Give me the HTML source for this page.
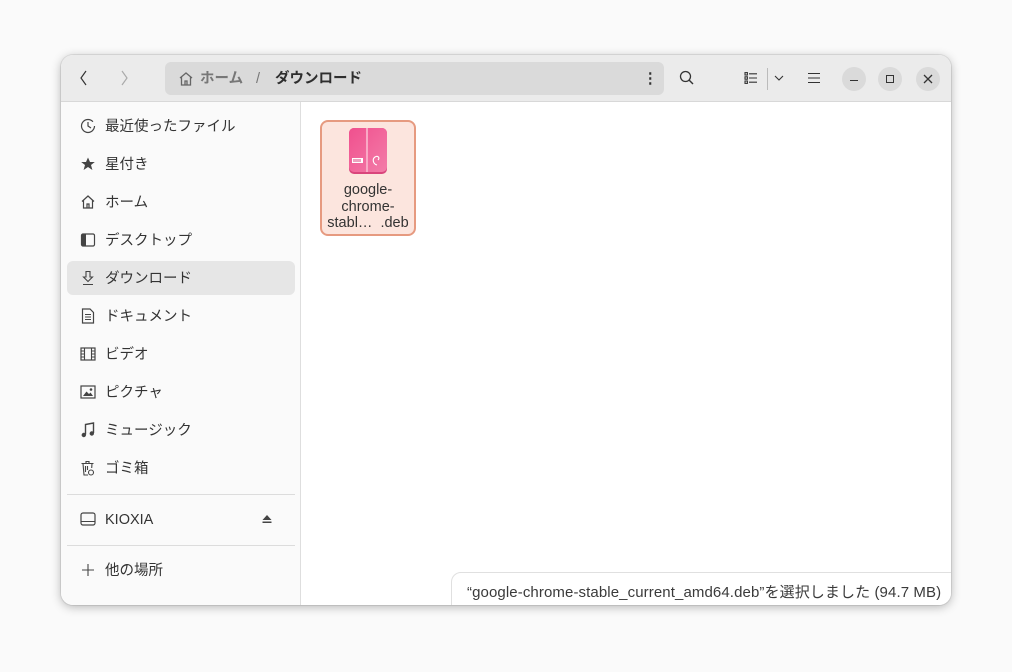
<!DOCTYPE html>
<html><head><meta charset="utf-8"><style>
*{margin:0;padding:0;box-sizing:border-box}
body{width:1012px;height:672px;background:#fafafa;font-family:"Liberation Sans","Noto Sans CJK JP",sans-serif;position:relative;overflow:hidden}
.win{position:absolute;left:61px;top:55px;width:890px;height:550px;border-radius:12px;background:#fff;box-shadow:0 2px 10px rgba(0,0,0,.28),0 0 0 1px rgba(0,0,0,.08);overflow:hidden}
.hdr{position:absolute;left:0;top:0;width:890px;height:47px;background:#ebebeb;border-bottom:1px solid #d8d8d8}
.side{position:absolute;left:0;top:47px;width:240px;height:503px;background:#fafafa;border-right:1px solid #dedede}
.item{position:absolute;left:6px;width:228px;height:34px;border-radius:6px;font-size:14.5px;color:#333;line-height:36px;padding-left:38px}
.item svg{position:absolute;left:13px;top:9px}
.sel{background:#e6e6e6}
.sep{position:absolute;left:6px;width:228px;height:1px;background:#dcdcdc}
.path{position:absolute;left:104px;top:7px;width:499px;height:33px;background:#dadada;border-radius:6px;font-size:14.5px;line-height:35px}
.btn{position:absolute;top:12px;width:24px;height:24px;border-radius:50%;background:#dadada}
.status{position:absolute;left:390px;top:517px;width:520px;height:50px;background:#fff;border:1px solid #e0e0e0;border-radius:10px;font-size:15px;color:#3a3a3a;padding:8px 0 0 15px;letter-spacing:0.1px}
</style></head><body>
<div class="win">
<div class="hdr">
 <svg style="position:absolute;left:18px;top:15px" width="10" height="16"><path d="M7 1 L2 8 L7 15" stroke="#333" stroke-width="1.2" fill="none"/></svg>
 <svg style="position:absolute;left:58px;top:15px" width="10" height="16"><path d="M3 1 L8 8 L3 15" stroke="#aaa" stroke-width="1.2" fill="none"/></svg>
 <div class="path">
  <svg style="position:absolute;left:13px;top:9px" width="16" height="16"><path d="M2 7 L8 2 L14 7 M3.5 6 V14 H12.5 V6 M7 14 V10 H9 V14" stroke="#666" stroke-width="1.3" fill="none"/></svg>
  <span style="position:absolute;left:35px;color:#777;font-weight:bold">ホーム</span>
  <span style="position:absolute;left:91px;color:#777">/</span>
  <span style="position:absolute;left:110px;color:#2e2e2e;font-weight:bold">ダウンロード</span>
  <span style="position:absolute;left:478px;top:0;color:#333;font-weight:bold">⋮</span>
 </div>
 <svg style="position:absolute;left:618px;top:15px" width="16" height="16"><circle cx="6.5" cy="6.5" r="5" stroke="#333" stroke-width="1.3" fill="none"/><path d="M10 10 L14 14" stroke="#333" stroke-width="1.4"/></svg>
 <svg style="position:absolute;left:683px;top:17px" width="14" height="12"><g fill="none" stroke="#333" stroke-width="1.1"><rect x="1" y="0.6" width="2.4" height="2.4"/><rect x="1" y="4.8" width="2.4" height="2.4"/><rect x="1" y="9" width="2.4" height="2.4"/></g><path d="M5 1.8H13M5 6H13M5 10.2H13" stroke="#333" stroke-width="1.1"/></svg>
 <div style="position:absolute;left:706px;top:13px;width:1px;height:22px;background:#bbb"></div>
 <svg style="position:absolute;left:713px;top:20px" width="10" height="7"><path d="M1 1 L5 5 L9 1" stroke="#333" stroke-width="1.1" fill="none"/></svg>
 <svg style="position:absolute;left:746px;top:17px" width="14" height="12"><path d="M1 1.5H13M1 6H13M1 10.5H13" stroke="#333" stroke-width="1.1"/></svg>
 <div class="btn" style="left:781px"><div style="position:absolute;left:8px;top:13px;width:8px;height:1.3px;background:#333"></div></div>
 <div class="btn" style="left:817px"><div style="position:absolute;left:8px;top:8px;width:8px;height:8px;border:1.3px solid #333"></div></div>
 <div class="btn" style="left:855px"><svg style="position:absolute;left:7px;top:7px" width="10" height="10"><path d="M1 1L9 9M9 1L1 9" stroke="#333" stroke-width="1.3"/></svg></div>
</div>
<div class="side">
 <div class="item" style="top:7px"><svg width="16" height="16"><circle cx="8" cy="8" r="6.5" stroke="#444" stroke-width="1.2" fill="none" stroke-dasharray="36 5"/><path d="M8 4V8L11 10" stroke="#444" stroke-width="1.2" fill="none"/></svg>最近使ったファイル</div>
 <div class="item" style="top:45px"><svg width="16" height="16"><path d="M8 1.5L10 6H14.8L11 9L12.4 14L8 11L3.6 14L5 9L1.2 6H6Z" fill="#444"/></svg>星付き</div>
 <div class="item" style="top:83px"><svg width="16" height="16"><path d="M2 7.5 L8 2 L14 7.5 M3.5 6 V14 H12.5 V6 M7 14 V10 H9 V14" stroke="#444" stroke-width="1.2" fill="none"/></svg>ホーム</div>
 <div class="item" style="top:121px"><svg width="16" height="16"><rect x="1.5" y="2" width="13" height="12" rx="1.5" stroke="#444" stroke-width="1.2" fill="none"/><rect x="2" y="2.5" width="4" height="11" fill="#444"/></svg>デスクトップ</div>
 <div class="item sel" style="top:159px"><svg width="16" height="16"><path d="M6 1.5H10V7H12.5L8 11.5L3.5 7H6Z M3 14.5H13" stroke="#444" stroke-width="1.1" fill="none"/></svg>ダウンロード</div>
 <div class="item" style="top:197px"><svg width="16" height="16"><path d="M2.5 1H10L13.5 4.5V15H2.5Z" stroke="#444" stroke-width="1.2" fill="none"/><path d="M5 6.5H11M5 9H11M5 11.5H11" stroke="#444" stroke-width="1.1"/></svg>ドキュメント</div>
 <div class="item" style="top:235px"><svg width="16" height="16"><rect x="1" y="2" width="14" height="12" stroke="#444" stroke-width="1.2" fill="none"/><path d="M4.5 2V14M11.5 2V14M1 8H4.5M11.5 8H15M1 5H4.5M1 11H4.5M11.5 5H15M11.5 11H15" stroke="#444" stroke-width="1.1"/></svg>ビデオ</div>
 <div class="item" style="top:273px"><svg width="16" height="16"><rect x="1" y="2" width="14" height="12" stroke="#444" stroke-width="1.2" fill="none"/><path d="M3 12L6.5 7.5L9 10L10.5 8.5L13 12Z" fill="#444"/><circle cx="11" cy="5.5" r="1.3" fill="#444"/></svg>ピクチャ</div>
 <div class="item" style="top:311px"><svg width="16" height="16"><path d="M5.5 12.5V2.5L13.5 1V11" stroke="#444" stroke-width="1.4" fill="none"/><circle cx="3.8" cy="13" r="2.2" fill="#444"/><circle cx="11.8" cy="11.5" r="2.2" fill="#444"/></svg>ミュージック</div>
 <div class="item" style="top:349px"><svg width="16" height="16"><path d="M1.5 3.5H13.5M6 3.5V1.5H9V3.5M3 3.5L4 15H8M12 3.5L11.7 8M5.5 6V12M7.5 6V10" stroke="#444" stroke-width="1.1" fill="none"/><circle cx="11" cy="12.5" r="2.5" stroke="#444" stroke-width="1.1" fill="none"/></svg>ゴミ箱</div>
 <div class="sep" style="top:392px"></div>
 <div class="item" style="top:400px"><svg width="16" height="16"><rect x="1" y="2" width="14" height="12" rx="2" stroke="#444" stroke-width="1.2" fill="none"/><path d="M1 10.5H15" stroke="#444" stroke-width="1.1"/></svg>KIOXIA<svg style="left:195px;top:12px" width="10" height="10"><path d="M5 1L9.5 6H0.5Z M0.5 7.5H9.5V9H0.5Z" fill="#444"/></svg></div>
 <div class="sep" style="top:443px"></div>
 <div class="item" style="top:451px"><svg width="16" height="16"><path d="M8 2V14M2 8H14" stroke="#444" stroke-width="1.1"/></svg>他の場所</div>
</div>
<div style="position:absolute;left:259px;top:65px;width:96px;height:116px;background:#fce5de;border:2px solid #e69a80;border-radius:8px">
 <svg style="position:absolute;left:26px;top:5px" width="40" height="48"><defs><linearGradient id="g" x1="0" y1="0" x2="1" y2="1"><stop offset="0" stop-color="#f0508e"/><stop offset="1" stop-color="#f37ca8"/></linearGradient></defs><rect x="1" y="1" width="38" height="46" rx="5" fill="#d9457c"/><rect x="1" y="1" width="38" height="44" rx="5" fill="url(#g)"/><rect x="18" y="1" width="2" height="44" fill="#f9a9c5"/><rect x="4" y="31" width="11" height="5" fill="#fff"/><path d="M6 32V35M8 32V35M10 32V35M12 32V35" stroke="#d9457c" stroke-width="1"/><path d="M29 38 C25 37 24 32 27 30 C30 28 32 31 30 33" stroke="#fff" stroke-width="1.1" fill="none"/></svg>
 <div style="position:absolute;top:60px;width:92px;text-align:center;font-size:14.5px;line-height:16.5px;color:#333">google-<br>chrome-<br>stabl…&nbsp;&nbsp;.deb</div>
</div>
<div class="status">“google-chrome-stable_current_amd64.deb”を選択しました (94.7 MB)</div>
</div>
</body></html>
